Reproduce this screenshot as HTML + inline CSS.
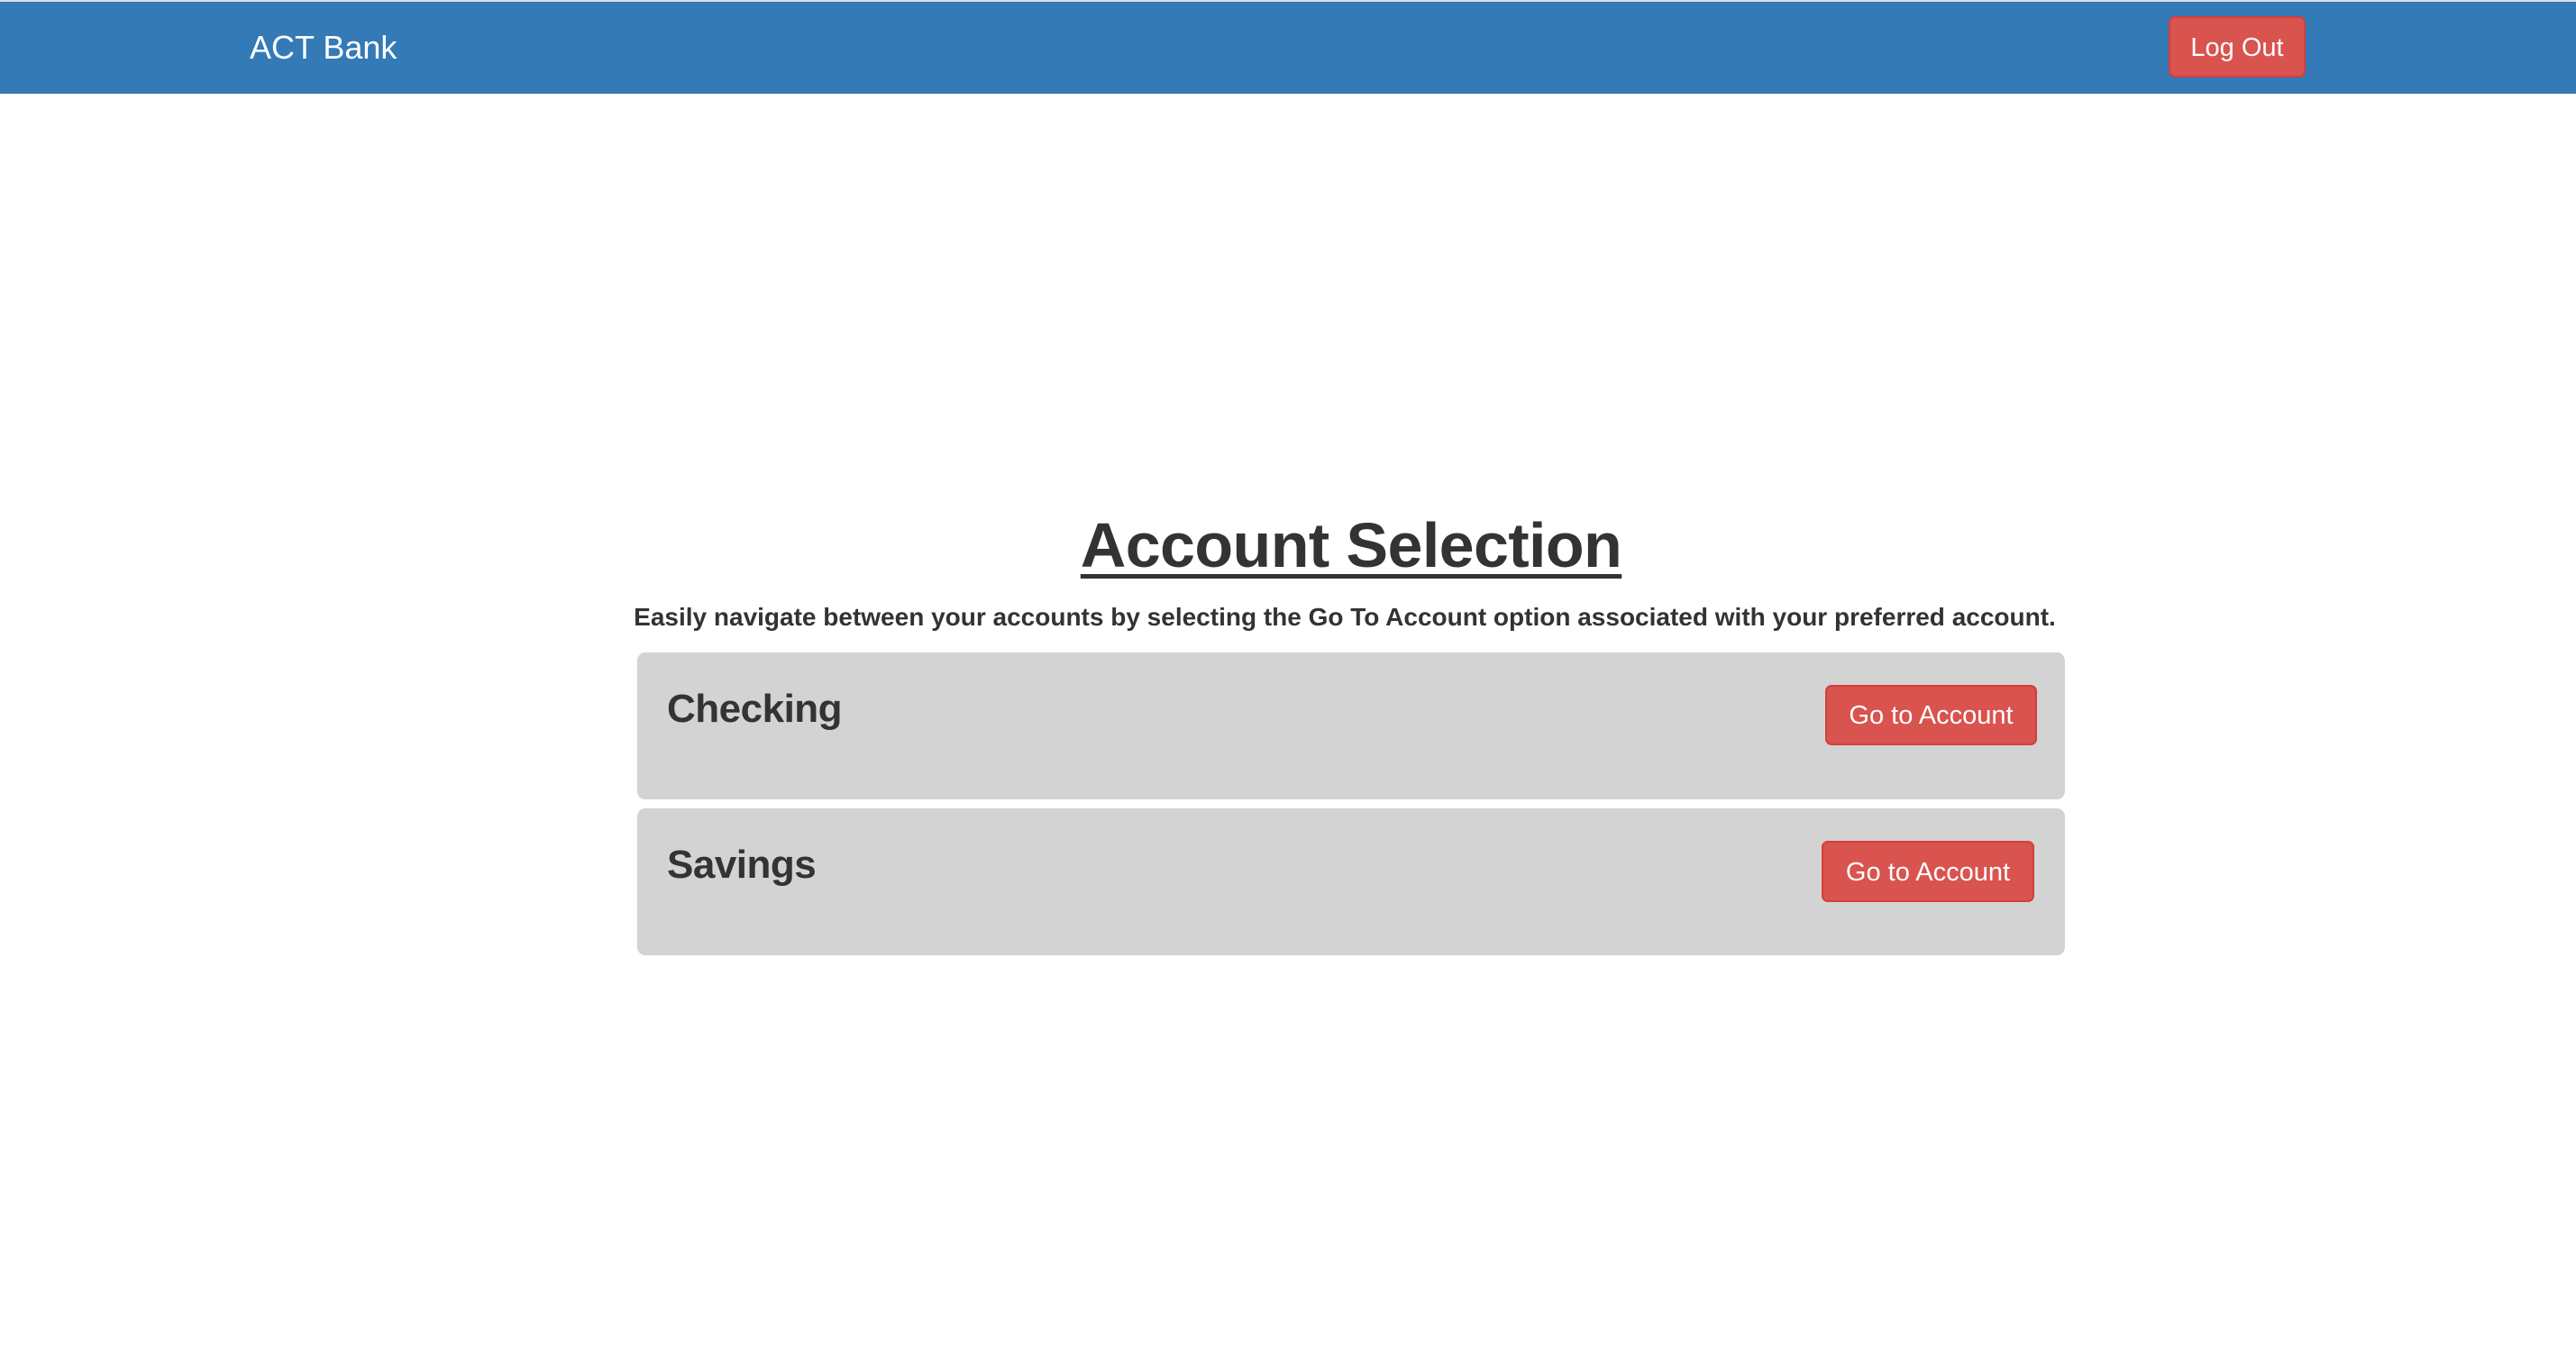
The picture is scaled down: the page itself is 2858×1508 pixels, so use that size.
<!DOCTYPE html>
<html><head><meta charset="utf-8"><style>
html,body{margin:0;padding:0;width:2858px;height:1508px;background:#fff;overflow:hidden;font-family:"Liberation Sans",Arial,sans-serif;color:#333;position:relative}
.top{position:absolute;left:0;top:0;width:2858px;height:2px;background:#ddd}
.nav{position:absolute;left:0;top:2px;width:2858px;height:102px;background:#337ab7}
.brand{position:absolute;left:277px;top:31px;font-size:36px;line-height:40px;color:#fff}
.btn{position:absolute;background:#d9534f;border:2px solid #d43f3a;border-radius:7px;color:#fff;box-sizing:border-box;text-align:center;font-size:29px}
.logout{left:2406px;top:18px;width:152px;height:68px;line-height:66px}
h1{position:absolute;left:0;width:2998px;top:550px;margin:0;text-align:center;font-size:70px;line-height:110px;font-weight:bold;letter-spacing:-0.6px;text-decoration:underline;text-decoration-thickness:5px;text-underline-offset:8px;color:#333}
.sub{position:absolute;left:0;width:2984px;top:667px;text-align:center;font-size:28px;line-height:36px;font-weight:bold;color:#333}
.card{position:absolute;left:707px;width:1584px;height:163px;background:#d3d3d3;border-radius:9px}
.card h2{position:absolute;left:33px;top:35px;margin:0;font-size:44px;line-height:56px;font-weight:bold;color:#333;letter-spacing:-0.5px}
</style></head><body>
<div class="top"></div>
<div class="nav"><div class="brand">ACT Bank</div></div>
<div class="btn logout">Log Out</div>
<h1>Account Selection</h1>
<div class="sub">Easily navigate between your accounts by selecting the Go To Account option associated with your preferred account.</div>
<div class="card" style="top:724px"><h2>Checking</h2></div>
<div class="btn" style="left:2025px;top:760px;width:235px;height:67px;line-height:65px">Go to Account</div>
<div class="card" style="top:897px"><h2>Savings</h2></div>
<div class="btn" style="left:2021px;top:933px;width:236px;height:68px;line-height:66px">Go to Account</div>
</body></html>
